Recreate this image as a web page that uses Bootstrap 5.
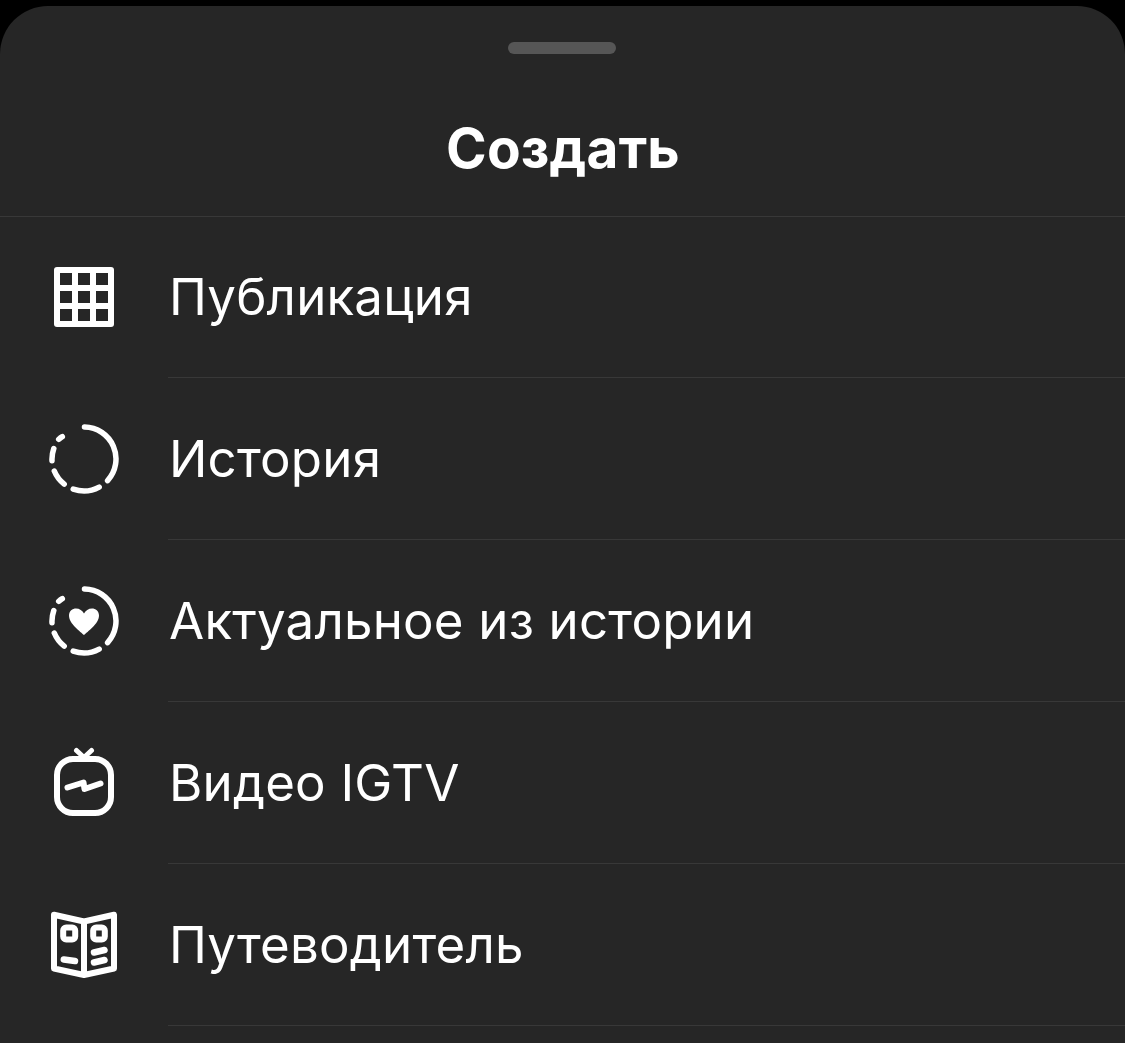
<!DOCTYPE html>
<html lang="ru">
<head>
<meta charset="utf-8">
<title>Создать</title>
<link href="https://cdn.jsdelivr.net/npm/bootstrap@5.3.0/dist/css/bootstrap.min.css" rel="stylesheet">
<style>
html,body{height:100%;margin:0;background:#000;overflow:hidden}
body{font-family:Inter,"Liberation Sans",sans-serif;color:#fff}
.sheet{margin-top:6px;height:1037px;background:#262626;border-radius:48px 48px 0 0;overflow:hidden}
.sheet-head{height:211px;border-bottom:1px solid #383838}
.grabber{width:108px;height:12px;border-radius:6px;background:#565656;margin:36px 1px 0 0}
.sheet-title{font-size:55px;font-weight:700;line-height:60px;margin:64px 0 0 1px;color:#fff;letter-spacing:.2px}
.entry{height:162px;padding-left:48px}
.entry:first-child{height:161px}
.entry:first-child .entry-icon{margin-bottom:1px}
.entry-icon{width:72px;height:72px;flex:none;fill:none;stroke:#fff;stroke-linecap:round;stroke-linejoin:round}
.entry-body{margin-left:48px;border-bottom:1px solid #383838;font-size:51px;letter-spacing:.2px;line-height:60px;padding-left:1px}
</style>
</head>
<body>
<div class="sheet">
  <div class="sheet-head d-flex flex-column align-items-center">
    <div class="grabber"></div>
    <h1 class="sheet-title">Создать</h1>
  </div>
  <ul class="list-unstyled m-0">
    <li class="entry d-flex align-items-center">
      <svg class="entry-icon" viewBox="0 0 72 72"><rect x="6" y="6" width="60" height="60" rx="3" fill="#fff" stroke="none"/><g fill="#262626" stroke="none"><rect x="12" y="12" width="12" height="12"/><rect x="30" y="12" width="12" height="12"/><rect x="48" y="12" width="12" height="12"/><rect x="12" y="30" width="12" height="12"/><rect x="30" y="30" width="12" height="12"/><rect x="48" y="30" width="12" height="12"/><rect x="12" y="48" width="12" height="12"/><rect x="30" y="48" width="12" height="12"/><rect x="48" y="48" width="12" height="12"/></g></svg>
      <div class="entry-body flex-grow-1 align-self-stretch d-flex align-items-center">Публикация</div>
    </li>
    <li class="entry d-flex align-items-center">
      <svg class="entry-icon" viewBox="0 0 72 72" stroke-width="5.5"><path d="M36.5 4A32 32 0 0 1 59.6 57.6M51.2 64.1A32 32 0 0 1 25.2 66.1M16.2 61.1A32 32 0 0 1 6.3 48M4 37.7A32 32 0 0 1 5.8 25.5M10.7 16.3A32 32 0 0 1 14.3 13.7"/></svg>
      <div class="entry-body flex-grow-1 align-self-stretch d-flex align-items-center">История</div>
    </li>
    <li class="entry d-flex align-items-center">
      <svg class="entry-icon" viewBox="0 0 72 72" stroke-width="5.5"><path d="M36.5 4A32 32 0 0 1 59.6 57.6M51.2 64.1A32 32 0 0 1 25.2 66.1M16.2 61.1A32 32 0 0 1 6.3 48M4 37.7A32 32 0 0 1 5.8 25.5M10.7 16.3A32 32 0 0 1 14.3 13.7"/><path fill="#fff" stroke="none" d="M36 50C33 47 21 39 21 30.5C21 26 24.5 23.5 28 23.5C31.5 23.5 34.5 25.5 36 28.5C37.5 25.5 40.5 23.5 44 23.5C47.5 23.5 51 26 51 30.5C51 39 39 47 36 50Z"/></svg>
      <div class="entry-body flex-grow-1 align-self-stretch d-flex align-items-center">Актуальное из истории</div>
    </li>
    <li class="entry d-flex align-items-center">
      <svg class="entry-icon" viewBox="0 0 72 72" stroke-width="6"><rect x="9" y="12" width="54" height="54" rx="16"/><path stroke-width="5" d="M28.5 3.5L36 10.5L43.5 3.5"/><path stroke-width="6" d="M19.5 40.5L35.5 35.5L36.5 42L52.5 36.5"/></svg>
      <div class="entry-body flex-grow-1 align-self-stretch d-flex align-items-center">Видео IGTV</div>
    </li>
    <li class="entry d-flex align-items-center">
      <svg class="entry-icon" viewBox="0 0 72 72" stroke-width="6"><path d="M6 5.8L36 12.5L66 5.8V59.5L36 66L6 59.5ZM36 12.5V66"/><rect x="15.2" y="18.5" width="12" height="12" rx="3"/><rect x="45.2" y="18.5" width="11.6" height="12" rx="3"/><path stroke-width="6.5" d="M15.8 50.5L27 52M46 43.5L56.5 41M46 53.5L56.5 51"/></svg>
      <div class="entry-body flex-grow-1 align-self-stretch d-flex align-items-center">Путеводитель</div>
    </li>
  </ul>
</div>
<script src="https://cdn.jsdelivr.net/npm/bootstrap@5.3.0/dist/js/bootstrap.bundle.min.js"></script>
</body>
</html>
